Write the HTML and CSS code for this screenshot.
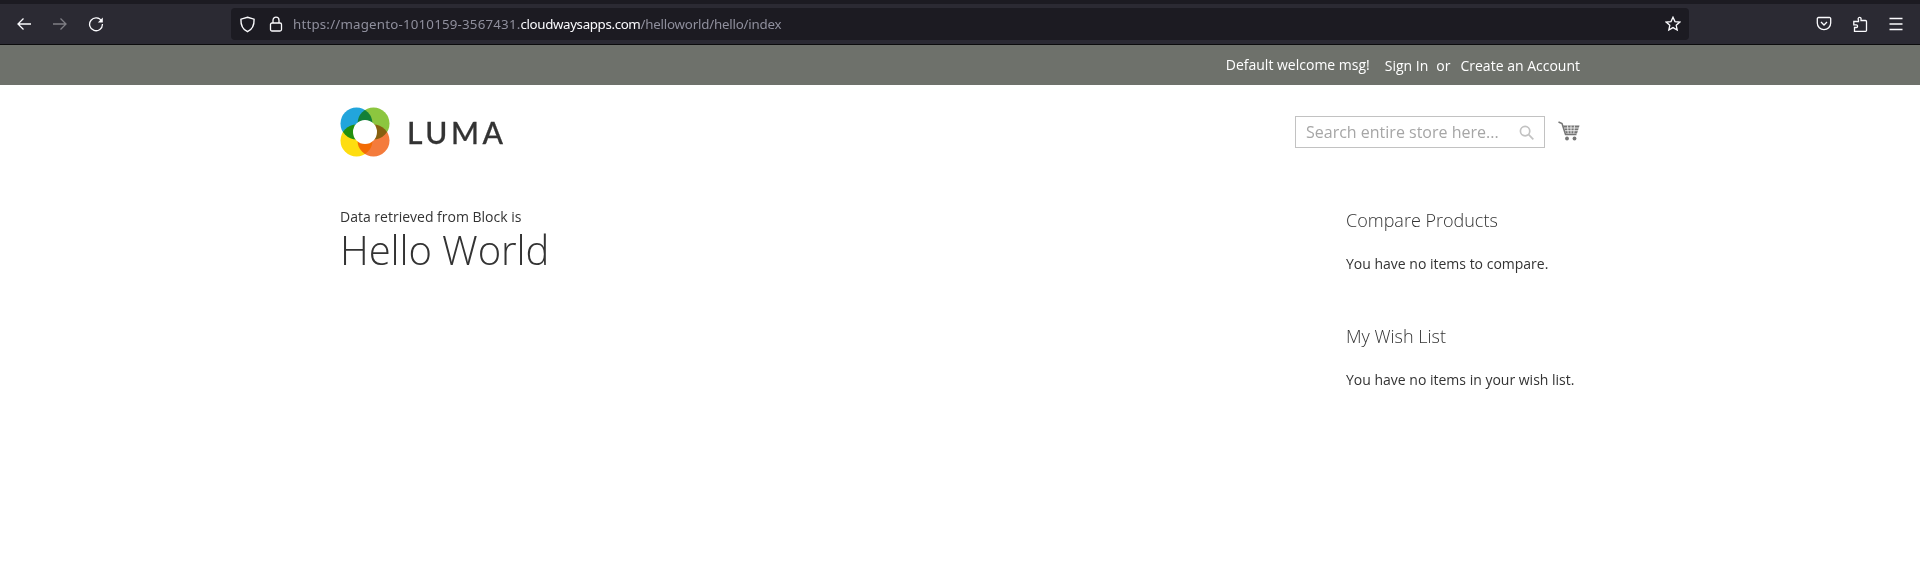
FILE: index.html
```html
<!DOCTYPE html>
<html lang="en">
<head>
  <meta charset="UTF-8" />
  <title>Hello World</title>
  <link rel="stylesheet" href="styles.css">
</head>
<body>
  <div class="browser">
    <div class="nav-icons">
      <svg class="icon" viewBox="0 0 16 16"><path d="M15 8H2M7.500 2.500 2 8l5.500 5.500"/></svg>
      <svg class="icon dim" viewBox="0 0 16 16"><path d="M1 8h13M8.500 2.500 14 8l-5.500 5.500"/></svg>
      <svg class="icon" viewBox="0 0 16 16"><path d="M13.600 5.200A6.400 6.400 0 1 0 14.400 8"/><path class="solid" d="M14.800 1.400v5h-5z"/></svg>
    </div>
    <div class="urlbar">
      <svg class="icon shield" viewBox="0 0 16 16"><path d="M8 1.200 14.200 3c.2 5.400-1.600 9.600-6.200 11.800C3.400 12.600 1.600 8.400 1.800 3z"/></svg>
      <svg class="icon lock" viewBox="0 0 16 16"><rect x="2.500" y="7" width="11" height="8" rx="1.500"/><path d="M5 7V4.200a3 3 0 0 1 6 0V7"/></svg>
      <div class="url"><span class="url-pre">https://magento-1010159-3567431.</span><span class="url-host">cloudwaysapps.com</span><span class="url-path">/helloworld/hello/index</span></div>
      <svg class="icon star" viewBox="0 0 16 16"><path d="M8 1.200 10 5.600l4.800.5-3.600 3.200 1 4.700L8 11.600 3.800 14l1-4.700L1.200 6.100 6 5.600z"/></svg>
    </div>
    <div class="tool-icons">
      <svg class="icon" viewBox="0 0 16 16"><path d="M2.500 1.500h11a1.200 1.200 0 0 1 1.200 1.200V7a6.700 6.700 0 0 1-13.400 0V2.700a1.200 1.200 0 0 1 1.200-1.200z"/><path d="m5 6 3 3 3-3"/></svg>
      <svg class="icon" viewBox="0 0 16 16"><path d="M7 1.500c1.300-.6 2.400.5 2 2v1h4.500a1 1 0 0 1 1 1v9a.8.800 0 0 1-.8.800H2.500v-3.800h1.800c1.700 0 1.700-2.600 0-2.600H1.800V5.500h4.700V4c-.6-1-.4-2 .5-2.500z"/></svg>
      <svg class="icon" viewBox="0 0 16 16"><path d="M1.500 2.500h13M1.500 8h13M1.500 13.500h13"/></svg>
    </div>
  </div>

  <div class="panel">
    <div class="wrap panel-inner">
      <span class="welcome">Default welcome msg!</span>
      <a class="link sign-in">Sign In</a>
      <span>or</span>
      <a class="link">Create an Account</a>
    </div>
  </div>

  <div class="wrap header">
    <div class="logo">
      <svg class="logo-mark" viewBox="0 0 50 50">
        <circle class="c-blue" cx="16.500" cy="16.500" r="16"/>
        <circle class="c-green" cx="33.500" cy="16.500" r="16"/>
        <circle class="c-yellow" cx="16.500" cy="33.500" r="16"/>
        <circle class="c-orange" cx="33.500" cy="33.500" r="16"/>
        <circle class="c-hole" cx="25" cy="25" r="12"/>
      </svg>
      <span class="logo-text">LUMA</span>
    </div>
    <div class="search">
      <span class="search-text">Search entire store here...</span>
      <svg class="search-icon" viewBox="0 0 16 16"><circle cx="6.500" cy="6.500" r="5"/><path d="m10.300 10.300 5 5"/></svg>
    </div>
    <svg class="cart" viewBox="0 0 22 20">
      <path class="cart-line" d="M.5 1 4 2.500l3.500 11h11"/>
      <path class="cart-basket" d="M5 4.500h16.500l-2.500 8H8z"/>
      <path class="cart-grid" d="M6 7h15M7 9.700h13M9.500 4.500l.7 8M13 4.500v8M16.500 4.500l-.7 8"/>
      <circle class="cart-wheel" cx="9" cy="17.500" r="1.900"/>
      <circle class="cart-wheel" cx="16.500" cy="17.500" r="1.900"/>
    </svg>
  </div>

  <div class="wrap columns">
    <div class="main">
      <div class="block-data">Data retrieved from Block is</div>
      <h1 class="hello">Hello World</h1>
    </div>
    <div class="sidebar">
      <div class="side-block">
        <h2>Compare Products</h2>
        <p>You have no items to compare.</p>
      </div>
      <div class="side-block">
        <h2>My Wish List</h2>
        <p>You have no items in your wish list.</p>
      </div>
    </div>
  </div>
</body>
</html>
```
FILE: styles.css
```css
* {
  box-sizing: border-box;
}
html, body {
  height: 100%;
}
body {
  margin: 0;
  background: #fff;
  color: #333;
  font-family: 'Open Sans', sans-serif;
  font-size: 14px;
  overflow: hidden;
}
.browser {
  display: flex;
  align-items: center;
  height: 45px;
  padding-top: 4px;
  background: linear-gradient(#1c1b22 4px, #2b2a33 4px);
  border-bottom: 1px solid #0c0c0d;
}
.icon {
  width: 16px;
  height: 16px;
  fill: none;
  stroke: #fbfbfe;
  stroke-width: 1.300;
}
.icon .solid {
  fill: #fbfbfe;
  stroke: none;
}
.dim {
  opacity: 0.4;
}
.nav-icons {
  display: flex;
  gap: 20px;
  width: 231px;
  padding-left: 16px;
}
.urlbar {
  display: flex;
  align-items: center;
  width: 1458px;
  height: 32px;
  padding: 0 8px 0 8px;
  background: #1c1b22;
  border-radius: 4px;
}
.shield {
  width: 17px;
  height: 17px;
}
.lock {
  margin-left: 12px;
}
.url {
  margin-left: 9px;
  flex: 1;
  font-family: 'Noto Sans', sans-serif;
  font-size: 13.300px;
  white-space: nowrap;
}
.url-pre {
  color: #8f8f9d;
  letter-spacing: 0.2px;
}
.url-host {
  color: #fbfbfe;
  letter-spacing: -0.35px;
}
.url-path {
  color: #8f8f9d;
  letter-spacing: -0.2px;
}
.tool-icons {
  display: flex;
  gap: 20px;
  padding-left: 127px;
}
.panel {
  height: 40px;
  background: #6e716b;
  color: #fff;
}
.wrap {
  width: 1280px;
  margin: 0 auto;
  padding: 0 20px;
}
.panel-inner {
  display: flex;
  justify-content: flex-end;
  align-items: center;
  gap: 10px;
  height: 40px;
}
.welcome {
  margin-right: 5px;
  margin-top: -2px;
}
.sign-in {
  margin-right: -2px;
}
.header {
  display: flex;
  align-items: center;
  height: 89px;
  padding-top: 6px;
}
.logo {
  display: flex;
  align-items: center;
  flex: 1;
  margin-top: -2px;
}
.logo-mark {
  width: 50px;
  height: 50px;
}
.c-blue { fill: #22a5dc; }
.c-green { fill: #8cc63f; mix-blend-mode: multiply; }
.c-yellow { fill: #fedd10; mix-blend-mode: multiply; }
.c-orange { fill: #f47b3c; mix-blend-mode: multiply; }
.c-hole { fill: #fff; }
.logo-text {
  margin-left: 17px;
  color: #333;
  font-family: Lato, sans-serif;
  font-size: 30px;
  font-weight: 500;
  letter-spacing: 3.600px;
  line-height: 1;
  -webkit-text-stroke: 0.3px #333;
}
.search {
  display: flex;
  align-items: center;
  justify-content: space-between;
  width: 250px;
  height: 32px;
  margin-top: -1px;
  padding: 0 10px;
  border: 1px solid #c2c2c2;
}
.search-text {
  color: #a6a6a6;
  font-size: 16px;
  white-space: nowrap;
}
.search-icon {
  width: 15px;
  height: 15px;
  fill: none;
  stroke: #c2c2c2;
  stroke-width: 1.800;
}
.cart {
  width: 22px;
  height: 20px;
  margin-left: 13px;
  margin-top: -3px;
}
.cart-line {
  fill: none;
  stroke: #757575;
  stroke-width: 1.500;
}
.cart-basket {
  fill: #757575;
}
.cart-grid {
  fill: none;
  stroke: #fff;
  stroke-width: 0.800;
}
.cart-wheel {
  fill: #757575;
}
.columns {
  display: flex;
  justify-content: space-between;
  padding-top: 33px;
}
.block-data {
  line-height: 20px;
}
.hello {
  margin: 1px 0 0;
  font-size: 40px;
  font-weight: 300;
  line-height: 44px;
  letter-spacing: -0.1px;
}
.sidebar {
  width: 234px;
  margin-top: 1px;
}
.side-block {
  margin-bottom: 50px;
}
.side-block h2 {
  margin: 0 0 22px;
  font-size: 18px;
  font-weight: 300;
  line-height: 24px;
}
.side-block p {
  margin: 0;
  line-height: 20px;
}
```
